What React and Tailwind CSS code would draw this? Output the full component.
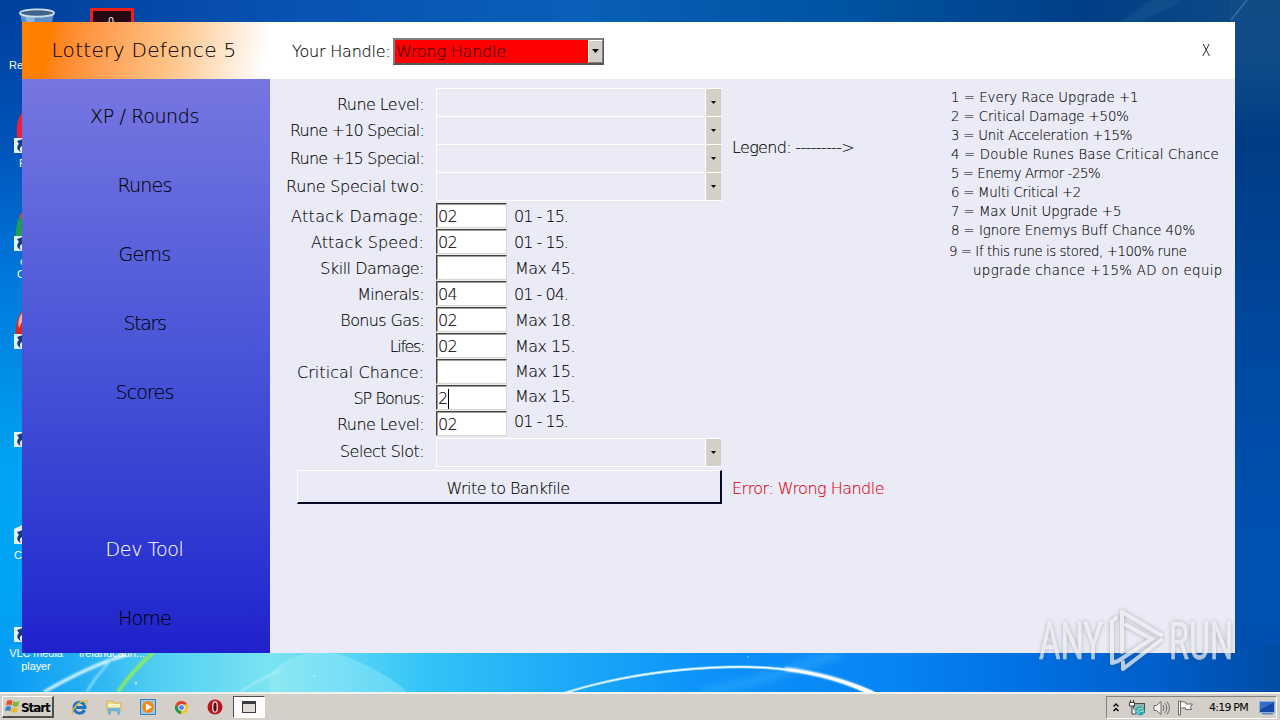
import React from 'react';
import { clsx } from 'clsx';

const navItems = [
  { label: 'XP / Rounds', spacing: 'tracking-[-0.36px]' },
  { label: 'Runes', spacing: 'tracking-[-0.8px]' },
  { label: 'Gems', spacing: 'tracking-[-0.7px]' },
  { label: 'Stars', spacing: 'tracking-[-1.35px]' },
  { label: 'Scores', spacing: 'tracking-[-0.85px]' },
];

const comboLabels = [
  { label: 'Rune Level:', spacing: 'tracking-[-0.57px]' },
  { label: 'Rune +10 Special:', spacing: 'tracking-[-0.79px]' },
  { label: 'Rune +15 Special:', spacing: 'tracking-[-0.79px]' },
  { label: 'Rune Special two:', spacing: 'tracking-[-0.29px]' },
];

const stats = [
  { label: 'Attack Damage:', spacing: 'tracking-[0.32px]', value: '02', hint: '01 - 15.' },
  { label: 'Attack Speed:', spacing: 'tracking-[0.1px]', value: '02', hint: '01 - 15.' },
  { label: 'Skill Damage:', spacing: 'tracking-[-0.5px]', value: '', hint: 'Max 45.' },
  { label: 'Minerals:', spacing: 'tracking-[-0.66px]', value: '04', hint: '01 - 04.' },
  { label: 'Bonus Gas:', spacing: 'tracking-[-0.62px]', value: '02', hint: 'Max 18.' },
  { label: 'Lifes:', spacing: 'tracking-[-1.4px]', value: '02', hint: 'Max 15.' },
  { label: 'Critical Chance:', spacing: 'tracking-[0.04px]', value: '', hint: 'Max 15.' },
  { label: 'SP Bonus:', spacing: 'tracking-[-0.95px]', value: '2', hint: 'Max 15.', focused: true },
  { label: 'Rune Level:', spacing: 'tracking-[-0.57px]', value: '02', hint: '01 - 15.' },
];

const legend = [
  { text: '1 = Every Race Upgrade +1', spacing: 'tracking-[0.02px]' },
  { text: '2 = Critical Damage +50%', spacing: 'tracking-[-0.06px]' },
  { text: '3 = Unit Acceleration +15%', spacing: 'tracking-[-0.22px]' },
  { text: '4 = Double Runes Base Critical Chance', spacing: 'tracking-[0.19px]' },
  { text: '5 = Enemy Armor -25%', spacing: 'tracking-[-0.42px]' },
  { text: '6 = Multi Critical +2', spacing: 'tracking-[-0.24px]' },
  { text: '7 = Max Unit Upgrade +5', spacing: 'tracking-[-0.04px]' },
  { text: '8 = Ignore Enemys Buff Chance 40%', spacing: 'tracking-[-0.04px]' },
];

// the hint rows drift up slightly towards the bottom of the list
function hintHeight(i) {
  if (i < 6) return 'h-[26px]';
  return i === 6 ? 'h-[24px]' : 'h-[25px]';
}

function Wallpaper() {
  return (
    <svg className="absolute inset-0" width="1280" height="720" viewBox="0 0 1280 720">
      <defs>
        <linearGradient id="top" x1="0" x2="1" y1="0" y2="0">
          <stop offset="0" stopColor="#003f9c" />
          <stop offset="0.2" stopColor="#0850b0" />
          <stop offset="0.45" stopColor="#0a5fb8" />
          <stop offset="0.65" stopColor="#0054a4" />
          <stop offset="0.85" stopColor="#003f86" />
          <stop offset="1" stopColor="#114c86" />
        </linearGradient>
        <linearGradient id="left" x1="0" x2="0" y1="0" y2="1">
          <stop offset="0" stopColor="#003f9c" />
          <stop offset="0.2" stopColor="#0052b8" />
          <stop offset="0.4" stopColor="#0078dc" />
          <stop offset="0.68" stopColor="#00a4f2" />
          <stop offset="0.85" stopColor="#00a4f6" />
          <stop offset="1" stopColor="#0a98f2" />
        </linearGradient>
        <linearGradient id="right" x1="0" x2="0" y1="0" y2="1">
          <stop offset="0" stopColor="#114c86" />
          <stop offset="0.1" stopColor="#0d4a88" />
          <stop offset="0.2" stopColor="#003c84" />
          <stop offset="0.5" stopColor="#0048a0" />
          <stop offset="0.8" stopColor="#0051b2" />
          <stop offset="1" stopColor="#004fb0" />
        </linearGradient>
        <linearGradient id="bottom" x1="0" x2="1" y1="0" y2="0">
          <stop offset="0" stopColor="#0a9bf3" />
          <stop offset="0.06" stopColor="#22aef4" />
          <stop offset="0.12" stopColor="#4fcdf2" />
          <stop offset="0.21" stopColor="#7ae4f2" />
          <stop offset="0.27" stopColor="#5ad6f6" />
          <stop offset="0.33" stopColor="#34c4f8" />
          <stop offset="0.43" stopColor="#1fadf8" />
          <stop offset="0.55" stopColor="#0c92fa" />
          <stop offset="0.7" stopColor="#0684f4" />
          <stop offset="0.79" stopColor="#0272e6" />
          <stop offset="0.9" stopColor="#0060cc" />
          <stop offset="1" stopColor="#004ba4" />
        </linearGradient>
        <filter id="soft"><feGaussianBlur stdDeviation="0.8" /></filter>
        <filter id="glow"><feGaussianBlur stdDeviation="4" /></filter>
      </defs>
      <rect width="1280" height="30" fill="url(#top)" />
      <rect width="30" height="692" fill="url(#left)" />
      <rect x="1230" width="50" height="692" fill="url(#right)" />
      <rect y="645" width="1280" height="47" fill="url(#bottom)" />
      <path d="M1231 20 L1247 0" stroke="#4f7ba8" strokeWidth="1.5" opacity="0.7" />
      <path d="M1120 22 L1150 0 H1185 L1140 22 Z" fill="#2c6299" opacity="0.3" filter="url(#soft)" />
      <path d="M270 692 C262 660 310 645 345 656 C375 668 395 680 407 692 Z" fill="#b9f4f6" opacity="0.3" />
      <g fill="none" filter="url(#soft)">
        <path d="M44 692 C72 676 98 663 126 655" stroke="#dcf8ff" strokeWidth="3" />
        <path d="M87 692 C93 680 102 670 112 659" stroke="#8fe2fa" strokeWidth="2" />
        <path d="M118 692 C128 677 140 664 154 652" stroke="#96f04c" strokeWidth="3" />
        <path d="M240 692 C252 684 264 678 280 670" stroke="#c5f5f7" strokeWidth="2" opacity="0.6" />
      </g>
      <path d="M700 692 C760 684 800 664 840 654" fill="none" stroke="#45b8ff" strokeWidth="7" opacity="0.5" filter="url(#glow)" />
      <path d="M562 693 C620 674 690 665 748 666 C800 667 845 678 879 694 H868 C838 679 800 669 748 668 C690 667 622 676 567 693 Z" fill="#f4fcff" stroke="#a4e2ff" strokeWidth="0.7" />
      <path d="M785 669 C820 673 848 682 872 693" fill="none" stroke="#fff" strokeWidth="3.5" filter="url(#soft)" />
      <circle cx="136" cy="683" r="1.5" fill="#a5edf5" />
      <circle cx="314" cy="676" r="1.3" fill="#a5f3f8" />
      <circle cx="748" cy="657" r="1" fill="#5cc0ff" />
    </svg>
  );
}

function ShortcutBadge({ className }) {
  return (
    <svg className={clsx('absolute left-[14px]', className)} width="15" height="15" viewBox="0 0 15 15">
      <rect width="15" height="15" fill="#e3f0fa" />
      <path d="M9 1 L3 3 L5 6 C2 9 3 12 7 14 C5 11 6 9 8 8 L10 10 Z" fill="#123c7c" />
    </svg>
  );
}

function DesktopIcons() {
  return (
    <div className="absolute inset-0 text-[11px] leading-[13px] text-white [font-family:'Liberation_Sans',sans-serif]">
      <svg className="absolute left-[18px] top-[8px]" width="38" height="20" viewBox="0 0 38 20">
        <path d="M2 5 L5 20 H33 L36 5 Z" fill="#5c8cc4" />
        <path d="M7 8 L10 20 H18 L16 8 Z" fill="#8fb4dc" />
        <ellipse cx="19" cy="5" rx="17" ry="3.6" fill="#3e6489" stroke="#cfdfe9" strokeWidth="1.8" />
      </svg>
      <div className="absolute left-[90px] top-[8px] h-[20px] w-[44px] border-[3px] border-[#f0201a] bg-[#260812] pr-[2px] text-center text-[10px] leading-[22px]">0</div>
      <span className="absolute left-[9px] top-[59px]">Re</span>
      <svg className="absolute left-[15px] top-[110px]" width="10" height="30" viewBox="0 0 10 30">
        <path d="M10 0 C2 5 0 20 3 30 H10 Z" fill="#f0203c" />
      </svg>
      <ShortcutBadge className="top-[138px]" />
      <span className="absolute left-[19px] top-[157px]">F</span>
      <svg className="absolute left-[15px] top-[210px]" width="10" height="30" viewBox="0 0 10 30">
        <path d="M10 0 C2 6 0 20 1 30 H10 Z" fill="#1f9d50" />
        <path d="M10 0 L4 6 L10 12 Z" fill="#d6452c" />
      </svg>
      <ShortcutBadge className="top-[236px]" />
      <span className="absolute left-[20px] top-[255px]">c</span>
      <span className="absolute left-[17px] top-[268px]">C</span>
      <svg className="absolute left-[15px] top-[308px]" width="10" height="30" viewBox="0 0 10 30">
        <path d="M10 0 C2 6 0 20 1 30 H10 Z" fill="#d42a20" />
        <path d="M7 5 C3 10 3 16 4 20 L8 12 Z" fill="#f6b0a4" />
      </svg>
      <ShortcutBadge className="top-[334px]" />
      <ShortcutBadge className="top-[432px]" />
      <svg className="absolute left-[14px] top-[524px]" width="10" height="6" viewBox="0 0 10 6">
        <path d="M0 5 L10 0 V6 H0 Z" fill="#dcebf5" />
      </svg>
      <ShortcutBadge className="top-[529px]" />
      <span className="absolute left-[14px] top-[549px]">C</span>
      <ShortcutBadge className="top-[627px]" />
      <div className="absolute left-[6px] top-[647px] w-[60px] text-center tracking-[-0.1px]">VLC media player</div>
      <span className="absolute left-[79px] top-[647px]">irelandcaun...</span>
    </div>
  );
}

function Arrow({ size }) {
  return (
    <svg width={size} height={size === '5' ? 3 : 4} viewBox="0 0 7 4" preserveAspectRatio="none">
      <path d="M0 0 H7 L3.5 4 Z" fill="#000" />
    </svg>
  );
}

function Combo({ last }) {
  return (
    <div
      className={clsx(
        'flex w-[286px] justify-end border-l border-t border-white',
        last ? 'h-[29px] border-b' : 'h-[28px]'
      )}
    >
      <div className="mr-px flex w-[16px] items-center justify-center border-l border-white bg-[#d4d0c8]">
        <Arrow size="5" />
      </div>
    </div>
  );
}

function Sidebar() {
  return (
    <nav className="flex w-[248px] flex-col items-center bg-linear-to-b from-[#7676e0] to-[#2020cc] pb-px pr-[3px] pt-[2px] text-[19px]">
      {navItems.map((item) => (
        <div key={item.label} className={clsx('flex h-[69px] items-center', item.spacing)}>
          {item.label}
        </div>
      ))}
      <div className="mt-auto flex h-[69px] items-center tracking-[-0.3px] text-white">Dev Tool</div>
      <div className="flex h-[69px] items-center tracking-[-0.78px]">Home</div>
    </nav>
  );
}

function Header() {
  return (
    <header className="flex h-[57px] bg-white">
      <div className="flex w-[248px] items-center justify-center bg-linear-100 from-[#ff8000] from-12% via-[#ffc488] via-60% to-white to-97% pb-[2px] pr-[4px] text-[20px] tracking-[0.32px]">
        Lottery Defence 5
      </div>
      <div className="flex flex-1 items-center pl-[22px] pr-[23px] pt-px">
        <span className="w-[101px] whitespace-nowrap pt-px tracking-[-0.2px]">Your Handle:</span>
        <div className="flex h-[27px] w-[211px] border-2 border-r border-[#808080] border-b-[#5c5450] border-r-[#5c5450] bg-[#ff0000]">
          <span className="flex-1 whitespace-nowrap pl-px leading-[24px] tracking-[-0.2px] text-[#400000]">Wrong Handle</span>
          <div className="flex w-[15px] items-center justify-center border border-b-[#808080] border-l-white border-r-[#808080] border-t-white bg-[#d4d0c8]">
            <Arrow size="7" />
          </div>
        </div>
        <span className="ml-auto w-[12px] text-center text-[15px] leading-none">
          <span className="inline-block scale-x-85">X</span>
        </span>
      </div>
    </header>
  );
}

function RuneForm() {
  return (
    <div className="flex">
      <div>
        <div className="flex">
          <div className="flex w-[154px] flex-col items-end whitespace-nowrap pt-[4px]">
            {comboLabels.map((row, i) => (
              <div key={row.label} className={clsx('flex items-center', row.spacing, i === 0 ? 'h-[25px]' : 'h-[28px]')}>
                {row.label}
              </div>
            ))}
            <div className="h-[3px]" />
            {stats.map((row, i) => (
              <div key={i} className={clsx('flex h-[26px] items-center', row.spacing)}>
                {row.label}
              </div>
            ))}
            <div className="flex h-[28px] items-center tracking-[-0.54px]">Select Slot:</div>
          </div>
          <div className="ml-[12px] w-[286px]">
            <Combo />
            <Combo />
            <Combo />
            <Combo last />
            <div className="flex pt-[2px]">
              <div className="flex flex-col">
                {stats.map((row, i) => (
                  <div
                    key={i}
                    className="mb-px flex h-[25px] w-[71px] items-center border border-b-[#d8d5ce] border-l-[#45423f] border-r-[#d8d5ce] border-t-[#45423f] bg-white pl-px pt-[2px] tracking-[-0.6px] shadow-[inset_1px_1px_0_#a09d98]"
                  >
                    {row.value}
                    {row.focused && <i className="h-[20px] w-px bg-black" />}
                  </div>
                ))}
              </div>
              <div className="flex flex-col whitespace-nowrap pl-[7px] pt-px">
                {stats.map((row, i) => (
                  <div
                    key={i}
                    className={clsx(
                      'flex items-center',
                      hintHeight(i),
                      row.hint.startsWith('Max') ? 'pl-px tracking-[-0.52px]' : 'tracking-[-0.97px]'
                    )}
                  >
                    {row.hint}
                  </div>
                ))}
              </div>
            </div>
            <div className="pt-px">
              <Combo last />
            </div>
          </div>
        </div>
        <button className="ml-[27px] mt-[3px] block h-[34px] w-[425px] border border-b-2 border-r-2 border-b-[#0a0a28] border-l-white border-r-[#0a0a28] border-t-white pr-[2px] pt-[4px] tracking-[-0.56px]">
          Write to Bankfile
        </button>
      </div>
      <div className="flex flex-col justify-between whitespace-nowrap pb-[3px] pl-[10px] pt-[48px]">
        <span className="tracking-[-0.67px]">Legend: ---------&gt;</span>
        <span className="tracking-[-0.52px] text-[#e00010]">Error: Wrong Handle</span>
      </div>
    </div>
  );
}

function Legend() {
  return (
    <div className="ml-auto w-[286px] whitespace-nowrap text-[13.3px] leading-[19px]">
      {legend.map((row) => (
        <div key={row.text} className={clsx('pl-[2px]', row.spacing)}>
          {row.text}
        </div>
      ))}
      <div className="mt-[2px] tracking-[-0.42px]">9 = If this rune is stored, +100% rune</div>
      <div className="pl-[24px] tracking-[0.38px]">upgrade chance +15% AD on equip</div>
    </div>
  );
}

function AppWindow() {
  return (
    <main className="absolute left-[22px] top-[22px] flex h-[631px] w-[1213px] flex-col font-extralight leading-[24px] text-black [-webkit-text-stroke:0.12px] [font-family:'DejaVu_Sans','Lato',sans-serif]">
      <Header />
      <div className="flex flex-1 bg-[#eaebf6]">
        <Sidebar />
        <div className="flex flex-1 items-start pt-[9px]">
          <RuneForm />
          <Legend />
        </div>
      </div>
    </main>
  );
}

function Watermark() {
  return (
    <svg className="absolute left-[1030px] top-[600px] overflow-visible drop-shadow-[0_0_2px_rgba(70,70,90,0.55)]" width="220" height="80" viewBox="1030 600 220 80">
      <g fill="#fff" stroke="#fff" strokeWidth="0.7" opacity="0.66" fontFamily="Roboto, sans-serif" fontSize="51">
        <text x="1039" y="659" textLength="64" lengthAdjust="spacingAndGlyphs">ANY</text>
        <text x="1169" y="659" textLength="64" lengthAdjust="spacingAndGlyphs">RUN</text>
      </g>
      <g fill="none" stroke="#fff" strokeWidth="4" strokeLinecap="round" strokeLinejoin="round" opacity="0.7">
        <path d="M1116 618 L1112 621 V663 L1118 661 L1150 640" />
        <path d="M1122 652 V612 L1161 635" />
        <path d="M1126 625 L1152 639" />
        <path d="M1161 640 L1123 669 V662" />
      </g>
    </svg>
  );
}

function TaskbarIcons() {
  return (
    <div className="flex items-center gap-[18px] pl-[17px]">
      <svg width="17" height="17" viewBox="0 0 17 17">
        <path d="M13.5 11 A5.5 5.5 0 1 1 14 8.5 H5" fill="none" stroke="#1c74c4" strokeWidth="3" />
        <path d="M2 15.5 C-1 12 8 1 15.5 1.5 C17 3 15 5 14.5 6" fill="none" stroke="#e4b93c" strokeWidth="1.5" />
      </svg>
      <svg width="16" height="16" viewBox="0 0 16 16">
        <path d="M1 2 H7 L8 4 H15 V12 H1 Z" fill="#f3d783" stroke="#c9a648" strokeWidth="0.7" />
        <path d="M2 5 H14 V8 H2 Z" fill="#fbf3c4" />
        <path d="M2 15.5 V9 H14 V15.5 H11 V12 H5 V15.5 Z" fill="#6cb3e3" />
      </svg>
      <svg width="16" height="16" viewBox="0 0 16 16">
        <rect x="0.5" y="0.5" width="15" height="15" fill="#9cc7e8" stroke="#3a80bc" />
        <circle cx="8" cy="8" r="6" fill="#f58a16" />
        <path d="M6 4.5 L12 8 L6 11.5 Z" fill="#fff" />
      </svg>
      <svg width="15" height="15" viewBox="0 0 16 16">
        <circle cx="8" cy="8" r="7" fill="#f4c72c" />
        <path d="M1.9 4.5 A7 7 0 0 1 14.1 4.5 L8 5 L5 9.5 Z" fill="#dc4033" />
        <path d="M1.9 4.5 L5 9.7 L8 11 L7.5 15 A7 7 0 0 1 1.9 4.5 Z" fill="#27964a" />
        <circle cx="8" cy="8" r="3.2" fill="#4a8af0" stroke="#fff" strokeWidth="1" />
      </svg>
      <svg width="16" height="16" viewBox="0 0 16 16">
        <circle cx="8" cy="8" r="7.5" fill="#b81420" />
        <ellipse cx="8" cy="8" rx="2.3" ry="5.2" fill="#501014" stroke="#f3c6c6" strokeWidth="1.4" />
      </svg>
    </div>
  );
}

function Taskbar() {
  return (
    <footer className="absolute bottom-0 left-0 flex h-[28px] w-[1280px] border-t-2 border-[#f4f2ee] bg-[#d4cfc8] text-[11px] text-black [font-family:'DejaVu_Sans',sans-serif]">
      <div className="ml-[2px] mt-[2px] flex h-[22px] w-[52px] items-center gap-px border border-b-2 border-r-2 border-b-[#504e4a] border-l-white border-r-[#504e4a] border-t-white pl-[2px]">
        <svg className="shrink-0" width="15" height="15" viewBox="0 0 16 16">
          <path d="M2 2 Q5 0 8 2 L7 7 Q4 5 1 7 Z" fill="#e8502a" />
          <path d="M9 2.5 Q12 4 15.5 2 L14 7.5 Q11 9 8 7.5 Z" fill="#7cb83c" />
          <path d="M1 8.5 Q4 6.5 6.5 8.5 L5.5 13 Q3 11.5 0 13 Z" fill="#3a7fd0" />
          <path d="M7.5 9 Q10 10.5 13.5 9 L12.5 14 Q9 15 6.5 13.5 Z" fill="#f3b81f" />
        </svg>
        <span className="pt-[2px] text-[12px] font-bold tracking-[-1.1px]">Start</span>
      </div>
      <TaskbarIcons />
      <div className="ml-[10px] mt-[2px] flex h-[22px] w-[32px] items-center justify-center border border-b-white border-l-[#504e4a] border-r-white border-t-[#504e4a] bg-[#fdfcfb]">
        <div className="h-[12px] w-[14px] border border-t-[3px] border-[#3c3c40] bg-[#dfdcd8]" />
      </div>
      <div className="ml-auto mr-[3px] mt-[2px] flex h-[23px] w-[171px] items-center border border-b-white border-l-[#86827c] border-r-white border-t-[#86827c] pl-[6px] pr-px">
        <svg width="6" height="9" viewBox="0 0 6 9">
          <path d="M0.5 3.5 L3 1 L5.5 3.5 M0.5 8 L3 5.5 L5.5 8" fill="none" stroke="#000" strokeWidth="1.4" />
        </svg>
        <svg className="ml-[10px]" width="17" height="16" viewBox="0 0 17 16">
          <rect x="4.5" y="3.5" width="11" height="9" fill="#8fb4ae" stroke="#43504e" />
          <path d="M1.5 0 V3 M4.5 0 V3 M0.5 2.5 H5.5 V6 H0.5 Z M3 6 V14 H7" fill="#fff" stroke="#3c3c3c" />
          <circle cx="11" cy="11" r="4.6" fill="#2fa9ae" />
          <path d="M8 12 C9 8 12 8 14 9 M9 14 C10 11 12 11 15 11" fill="none" stroke="#bdf0ee" />
        </svg>
        <svg className="ml-[7px]" width="18" height="16" viewBox="0 0 18 16" fill="#f5f4f1" stroke="#6c6a66">
          <path d="M1 5.5 H3.5 L8 1.5 V14.5 L3.5 10.5 H1 Z" />
          <path d="M10 5 Q12 8 10 11 M12 3 Q15.5 8 12 13 M14 1.5 Q19 8 14 14.5" fill="none" />
        </svg>
        <svg className="ml-[6px]" width="17" height="16" viewBox="0 0 17 16" fill="#fbfaf8" stroke="#6c6a66">
          <path d="M1.5 1 H3.5 V15 H1.5 Z" />
          <path d="M3.5 2 Q6 1 9 2.5 V4 H15.5 L13.5 7 L14.5 9.5 H8.5 V8 Q6 7.5 3.5 8.5 Z" />
        </svg>
        <span className="ml-auto whitespace-nowrap pt-[2px] tracking-[-0.75px]">4:19 PM</span>
        <svg className="ml-[11px]" width="16" height="14" viewBox="0 0 16 14">
          <rect x="0.5" y="0.5" width="15" height="11" fill="#1748a8" stroke="#8fb0da" />
          <path d="M1 1 H15 L1 9 Z" fill="#3f7fdc" opacity="0.7" />
          <path d="M3 12 H14 V13.5 H3 Z" fill="#5d88c0" />
        </svg>
      </div>
    </footer>
  );
}

export default function App() {
  return (
    <div className="relative h-[720px] w-[1280px] overflow-hidden bg-[#0a5fb8]">
      <Wallpaper />
      <DesktopIcons />
      <AppWindow />
      <Watermark />
      <Taskbar />
    </div>
  );
}
